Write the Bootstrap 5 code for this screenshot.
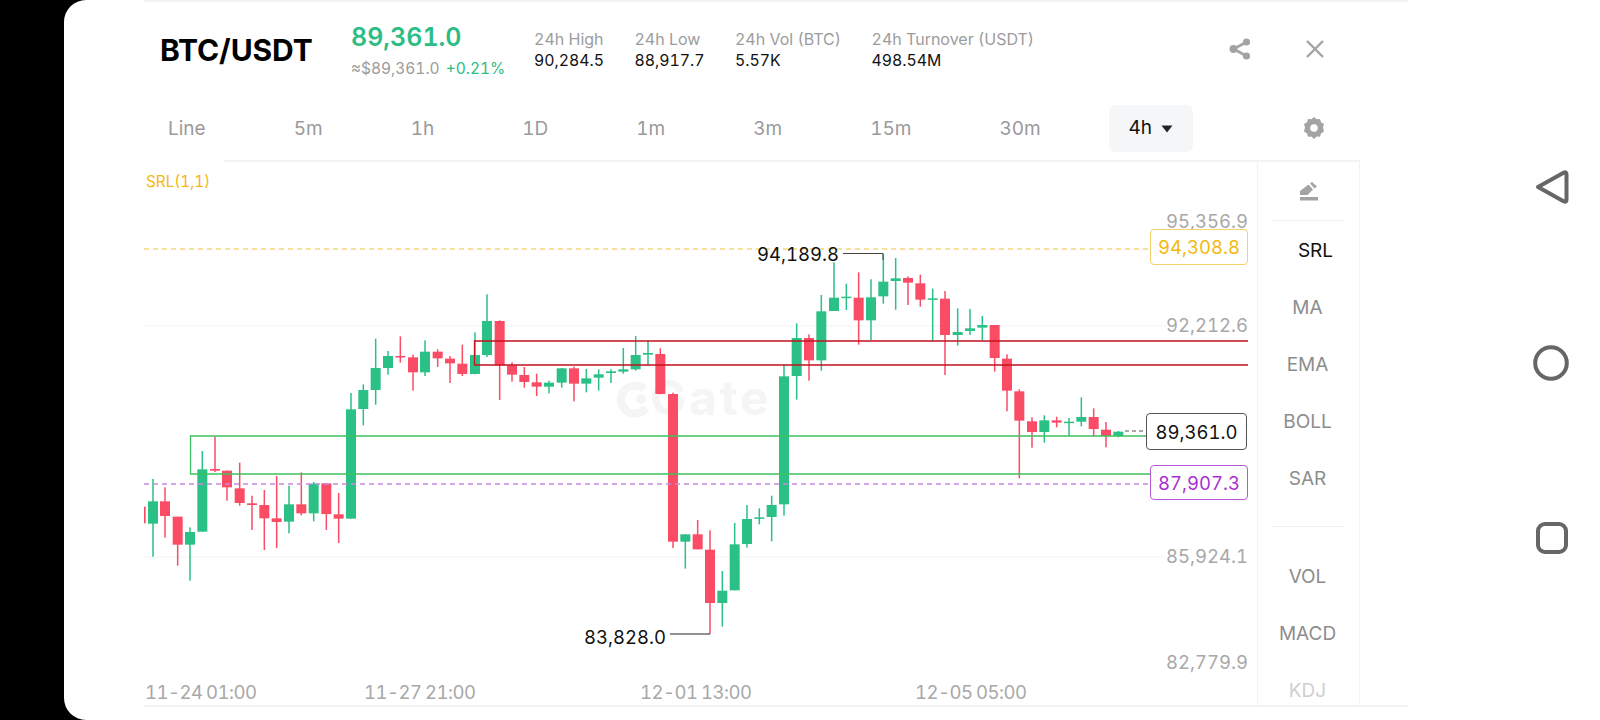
<!DOCTYPE html>
<html lang="en">
<head>
<meta charset="utf-8">
<title>BTC/USDT</title>
<link href="https://cdn.jsdelivr.net/npm/bootstrap@5.3.0/dist/css/bootstrap.min.css" rel="stylesheet">
<style>
html,body{height:720px;overflow:hidden;background:#000;font-family:Inter,"Liberation Sans",sans-serif;font-variant-numeric:tabular-nums;}
.phone{height:720px;padding-left:64px;}
.panel{width:1536px;height:720px;background:#fff;border-radius:22px 0 0 22px;padding-left:80px;}
.stage{width:1264px;height:707px;border-top:2px solid #f2f3f4;border-bottom:2px solid #f0f1f2;flex:none;}
.head-row{height:94px;padding-left:16px;}
.pair{font-size:30px;font-weight:700;color:#000;width:191px;line-height:1;margin-top:1px;letter-spacing:-.1px;}
.price-box{width:183px;padding-top:3px;}
.price{font-size:25px;font-weight:600;color:#2bbd85;line-height:30px;}
.sub{font-size:15.5px;color:#9c9c9c;line-height:20px;margin-top:7px;white-space:nowrap;}
.up{color:#2bbd85;margin-left:6px;}
.stats{gap:30.5px;margin-top:2px;}
.lab{font-size:16px;color:#9c9c9c;line-height:21px;white-space:nowrap;}
.val{font-size:15.8px;color:#111;line-height:21px;}
.icon-a{margin-left:auto;margin-right:54px;}
.icon-b{margin-right:83px;}
.tabs{height:64px;padding-left:24px;padding-top:3px;}
.tab{font-size:19px;color:#9a9a9a;margin-right:88px;white-space:nowrap;}
.tab-on{width:84px;height:47px;background:#f5f6f7;border-radius:7px;color:#111;margin-left:-20px;margin-right:0;flex:none;margin-top:-2px;}
.caret-ico{margin-left:9px;}
.gear{margin-left:110px;margin-top:-3px;}
.rule{height:2px;background:#f2f3f4;margin-left:80px;width:1136px;}
.chart-row{height:545px;}
.chart-wrap{width:1113px;height:544px;flex:none;position:relative;}
.chart-wrap svg text{font-family:Inter,"Liberation Sans",sans-serif;}
.ax{font-size:18.5px;fill:#a8a8a8;}
.axt{font-size:18.5px;fill:#a8a8a8;letter-spacing:-.5px;word-spacing:-1px;}
.ext{font-size:18.5px;fill:#111;}
.srl{font-size:15.3px;fill:#f4b90e;}
.wm{font-size:48px;font-weight:700;fill:#f5f5f5;letter-spacing:3px;}
.tag{position:absolute;background:#fff;border:1px solid;border-radius:4px;font-size:18.5px;padding-top:2px;display:flex;align-items:center;justify-content:center;}
.tag-y{left:1006px;top:67px;width:98px;height:36px;color:#f4b90e;border-color:#f6d26a;}
.tag-k{left:1002px;top:251px;width:101px;height:37px;color:#111;border-color:#555;}
.tag-p{left:1006px;top:303px;width:98px;height:35px;color:#a92fd1;border-color:#b65ad8;}
.side{width:103px;height:545px;flex:none;border-left:1px solid #f2f3f4;border-right:1px solid #f2f3f4;overflow:hidden;}
.sico{height:58px;padding-top:20px;}
.hr-s{height:1px;background:#eff0f1;margin:0 14px;}
.si{height:57px;font-size:19px;color:#8d8d8d;display:flex;align-items:center;justify-content:center;padding-right:2px;}
.si-on{color:#111;padding-left:14px;padding-right:0;margin-top:2px;}
.gap-s{height:18px;}
.gap-t{height:22px;}
.si-off{color:#cfcfcf;}
.rail{flex:1;padding:169px 31px 0 0;gap:140px;}
.rail svg{display:block;}
</style>
</head>
<body>
<div class="phone">
  <div class="panel d-flex">
    <div class="stage">
      <div class="head-row d-flex align-items-center">
        <div class="pair">BTC/USDT</div>
        <div class="price-box">
          <div class="price">89,361.0</div>
          <div class="sub">≈$89,361.0<span class="up">+0.21%</span></div>
        </div>
        <div class="stats d-flex">
          <div><div class="lab">24h High</div><div class="val">90,284.5</div></div>
          <div><div class="lab">24h Low</div><div class="val">88,917.7</div></div>
          <div><div class="lab">24h Vol (BTC)</div><div class="val">5.57K</div></div>
          <div><div class="lab">24h Turnover (USDT)</div><div class="val">498.54M</div></div>
        </div>
        <svg class="icon-a" width="22" height="22" viewBox="0 0 22 22" aria-label="share">
          <g fill="#a3a3a3"><circle cx="17.5" cy="4" r="3.6"/><circle cx="4.5" cy="11" r="4"/><circle cx="17.5" cy="18" r="3.6"/></g>
          <path d="M17.5 4 4.5 11 17.5 18" fill="none" stroke="#a3a3a3" stroke-width="2.6"/>
        </svg>
        <svg class="icon-b" width="20" height="18" viewBox="0 0 20 18" aria-label="close">
          <path d="M2 1 18 17M18 1 2 17" fill="none" stroke="#a3a3a3" stroke-width="2.4"/>
        </svg>
      </div>
      <div class="tabs d-flex align-items-center">
        <span class="tab">Line</span><span class="tab">5m</span><span class="tab">1h</span><span class="tab">1D</span><span class="tab">1m</span><span class="tab">3m</span><span class="tab">15m</span><span class="tab">30m</span>
        <span class="tab tab-on d-flex align-items-center justify-content-center">4h<svg class="caret-ico" width="12" height="8" viewBox="0 0 12 8"><path d="M0.5 0.5H11.5L6 7.5Z" fill="#222"/></svg></span>
        <svg class="gear" width="22" height="24" viewBox="0 0 22 24" aria-label="settings">
          <path fill-rule="evenodd" fill="#a3a3a3" d="M11 1 13.6 3.2 17 3 18 6.2 21 8 20 11.6 21 15.5 18 17.4 17 20.8 13.6 20.6 11 23 8.4 20.6 5 20.8 4 17.4 1 15.5 2 11.6 1 8 4 6.2 5 3 8.4 3.2ZM11 8.2A3.8 3.8 0 1 0 11 15.8 3.8 3.8 0 1 0 11 8.2Z"/>
        </svg>
      </div>
      <div class="rule"></div>
      <div class="chart-row d-flex">
        <div class="chart-wrap">
          <svg id="chart" width="1113" height="544" viewBox="144 162 1113 544">
            <text class="srl" x="146" y="187">SRL(1,1)</text>
            <line x1="144" x2="1166" y1="326" y2="326" stroke="#f2f3f4"/>
            <line x1="144" x2="1166" y1="557" y2="557" stroke="#f2f3f4"/>
            <g id="wm">
              <path d="M644 389A14 14 0 1 0 646 408" fill="none" stroke="#f5f5f5" stroke-width="8"/>
              <circle cx="641" cy="399" r="5" fill="#f5f5f5"/>
              <text class="wm" x="650" y="415">Gate</text>
            </g>
            <text class="ax" x="1248" y="228" text-anchor="end">95,356.9</text>
            <text class="ax" x="1248" y="332" text-anchor="end">92,212.6</text>
            <text class="ax" x="1248" y="563" text-anchor="end">85,924.1</text>
            <text class="ax" x="1248" y="669" text-anchor="end">82,779.9</text>
            <text class="axt" x="145" y="699">11-24 01:00</text>
            <text class="axt" x="364" y="699">11-27 21:00</text>
            <text class="axt" x="640" y="699">12-01 13:00</text>
            <text class="axt" x="915" y="699">12-05 05:00</text>
            <g id="candles"></g>
            <line x1="144" x2="1150" y1="249" y2="249" stroke="#f9d877" stroke-width="1.5" stroke-dasharray="5 4"/>
            <line x1="144" x2="1150" y1="484" y2="484" stroke="#c88be2" stroke-width="1.5" stroke-dasharray="5 4"/>
            <path d="M1248 341H474.5V365H1248" fill="none" stroke="#c4121f" stroke-width="1.3"/>
            <path d="M1146 436H190.5V474H1150" fill="none" stroke="#3fc15c" stroke-width="1.3"/>
            <line x1="1125" x2="1146" y1="431" y2="431" stroke="#555" stroke-dasharray="4 3"/>
            <path d="M843 253.5H883V260" fill="none" stroke="#444" stroke-width="1"/>
            <path d="M670 634H710" fill="none" stroke="#222" stroke-width="1"/>
            <text class="ext" x="757" y="261">94,189.8</text>
            <text class="ext" x="584" y="644">83,828.0</text>
          </svg>
          <span class="tag tag-y">94,308.8</span>
          <span class="tag tag-k">89,361.0</span>
          <span class="tag tag-p">87,907.3</span>
        </div>
        <div class="side">
          <div class="sico d-flex justify-content-center">
            <svg width="20" height="20" viewBox="0 0 20 20" aria-label="draw">
              <path fill="#a3a3a3" d="M1 13V9L9.5 2.5 14 7.5 8.5 13ZM11 1.5 13 0 18 4.5 15.5 6.5ZM1 15H19V18.5H1Z"/>
            </svg>
          </div>
          <div class="hr-s"></div>
          <div class="si si-on">SRL</div>
          <div class="si">MA</div>
          <div class="si">EMA</div>
          <div class="si">BOLL</div>
          <div class="si">SAR</div>
          <div class="gap-s"></div>
          <div class="hr-s"></div>
          <div class="gap-t"></div>
          <div class="si">VOL</div>
          <div class="si">MACD</div>
          <div class="si si-off">KDJ</div>
        </div>
      </div>
    </div>
    <div class="rail d-flex flex-column align-items-end">
      <svg width="34" height="36" viewBox="0 0 34 36" aria-label="back"><path d="M3 18 29 3.500Q31.500 2.500 31.500 5.500V30.500Q31.500 33.500 29 32.500Z" fill="none" stroke="#666" stroke-width="4" stroke-linejoin="round"/></svg>
      <svg width="36" height="36" viewBox="0 0 36 36" aria-label="home"><circle cx="18" cy="18" r="15.800" fill="none" stroke="#666" stroke-width="4"/></svg>
      <svg width="34" height="34" viewBox="0 0 34 34" aria-label="recent"><rect x="3" y="3" width="28" height="28" rx="7" fill="none" stroke="#666" stroke-width="4"/></svg>
    </div>
  </div>
</div>
<script>
var GREEN='#2bc086',RED='#fb4c66';
function seg(ox,oy,rows){return rows.map(function(r){return {x:ox+r[0]/3,c:r[1],wt:oy+r[2]/3,bt:oy+r[3]/3,bb:oy+r[4]/3,wb:oy+r[5]/3};});}
var data=[].concat(
 seg(130,280,[[32,'r',680,680,730,730],[69,'g',597,664,731,830],[105,'r',622,664,708,773],[143,'r',710,710,794,857],[180,'g',742,756,794,902],[217,'g',513,568,755,755],[255,'r',470,567,572,576],[291,'r',572,572,622,662],[329,'r',548,625,669,677],[366,'r',647,670,675,750],[403,'r',630,675,715,810],[440,'r',588,715,726,804],[477,'g',617,673,725,760],[514,'r',577,673,700,706],[551,'g',606,611,700,724],[589,'r',610,610,702,750],[626,'r',639,703,716,789],[663,'g',339,388,716,716],[700,'g',313,330,387,436],[737,'g',176,264,330,374],[774,'g',213,228,264,284],[811,'r',169,228,232,248],[849,'r',224,232,277,332],[885,'g',181,215,277,288],[923,'r',208,215,235,261],[960,'r',228,236,250,309],[997,'r',194,251,282,288],[1035,'g',157,225,282,283],[1071,'g',43,123,225,231],[1109,'r',121,123,256,360],[1146,'r',247,256,284,305],[1183,'r',261,285,306,323]]),
 seg(480,280,[[170,'r',281,307,320,348],[207,'g',302,308,320,340],[245,'g',264,265,308,323],[282,'r',260,265,311,364],[319,'g',267,295,311,337],[356,'g',268,283,293,332],[393,'g',268,274,279,309],[430,'g',204,268,275,281],[467,'g',168,225,268,272],[504,'g',182,219,224,256],[541,'r',205,222,342,343],[579,'r',338,342,785,804],[616,'g',763,763,785,866],[653,'r',720,763,808,808],[690,'r',751,809,969,1062],[727,'g',873,932,969,1040],[764,'g',729,793,931,931],[801,'g',675,717,792,803],[838,'g',685,712,716,733],[875,'g',647,675,711,784],[912,'g',254,289,673,707]]),
 seg(770,230,[[80,'g',280,324,438,509],[117,'r',313,324,391,452],[154,'g',195,244,391,422],[192,'g',97,203,243,243],[229,'g',161,200,204,240],[266,'r',127,203,271,344],[303,'g',148,202,271,330],[340,'g',72,155,199,221],[377,'g',84,145,153,239],[414,'r',139,144,158,225],[451,'r',134,160,209,230],[488,'g',176,205,209,333],[525,'r',183,206,315,435],[563,'g',235,306,315,347],[600,'g',237,295,303,315],[637,'g',258,285,293,331],[674,'r',285,285,384,425],[711,'r',373,386,482,544],[748,'r',478,484,572,745],[786,'r',562,574,606,653],[823,'g',556,571,606,638],[860,'r',560,571,578,592],[897,'g',564,575,577,619],[934,'g',502,561,575,589],[971,'r',535,561,597,619],[1008,'r',576,599,618,652],[1045,'g',603,605,618,622]])
);
var out='';
data.forEach(function(d){
  var col=d.c==='g'?GREEN:RED;
  out+='<rect x="'+(d.x-.75).toFixed(2)+'" y="'+d.wt.toFixed(2)+'" width="1.5" height="'+(d.wb-d.wt).toFixed(2)+'" fill="'+col+'"/>';
  out+='<rect x="'+(d.x-5).toFixed(2)+'" y="'+d.bt.toFixed(2)+'" width="10" height="'+Math.max(d.bb-d.bt,1.5).toFixed(2)+'" fill="'+col+'"/>';
});
document.getElementById('candles').innerHTML=out;
</script>
<script src="https://cdn.jsdelivr.net/npm/bootstrap@5.3.0/dist/js/bootstrap.bundle.min.js"></script>
</body>
</html>
